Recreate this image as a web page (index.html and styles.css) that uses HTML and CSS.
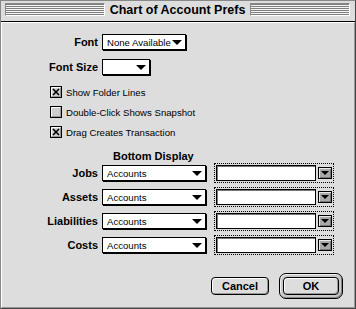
FILE: index.html
```html
<!DOCTYPE html>
<html lang="en">
<head>
  <meta charset="UTF-8" />
  <title>Chart of Account Prefs</title>
  <link rel="stylesheet" href="styles.css">
</head>
<body>

<div class="window">
  <div class="titlebar">
    <span class="stripes"></span>
    <span class="title">Chart of Account Prefs</span>
    <span class="stripes"></span>
  </div>

  <div class="content">
    <div class="row font-row">
      <span class="label">Font</span>
      <div class="popup popup-font"><span>None Available</span><i class="arrow"></i></div>
    </div>
    <div class="row size-row">
      <span class="label">Font Size</span>
      <div class="popup popup-size"><span></span><i class="arrow"></i></div>
    </div>

    <div class="checks">
      <div class="check">
        <svg width="12" height="12" viewBox="0 0 12 12"><rect x="0.5" y="0.5" width="11" height="11" fill="#cfcfcf" stroke="#000"/><path d="M1.5 10V1.5H10" stroke="#fff" fill="none"/><path d="M2 10.5H10.5V2" stroke="#999" fill="none"/><path d="M3 3L9 9M9 3L3 9" stroke="#000" stroke-width="1.6"/></svg>
        <span>Show Folder Lines</span>
      </div>
      <div class="check">
        <svg width="12" height="12" viewBox="0 0 12 12"><rect x="0.5" y="0.5" width="11" height="11" fill="#cfcfcf" stroke="#000"/><path d="M1.5 10V1.5H10" stroke="#fff" fill="none"/><path d="M2 10.5H10.5V2" stroke="#999" fill="none"/></svg>
        <span>Double-Click Shows Snapshot</span>
      </div>
      <div class="check">
        <svg width="12" height="12" viewBox="0 0 12 12"><rect x="0.5" y="0.5" width="11" height="11" fill="#cfcfcf" stroke="#000"/><path d="M1.5 10V1.5H10" stroke="#fff" fill="none"/><path d="M2 10.5H10.5V2" stroke="#999" fill="none"/><path d="M3 3L9 9M9 3L3 9" stroke="#000" stroke-width="1.6"/></svg>
        <span>Drag Creates Transaction</span>
      </div>
    </div>

    <div class="section-title">Bottom Display</div>

    <div class="display-rows">
      <div class="row display-row">
        <span class="label">Jobs</span>
        <div class="popup popup-wide"><span>Accounts</span><i class="arrow"></i></div>
        <div class="combo"><div class="field"></div><div class="combo-btn"><i class="mini-arrow"></i></div></div>
      </div>
      <div class="row display-row">
        <span class="label">Assets</span>
        <div class="popup popup-wide"><span>Accounts</span><i class="arrow"></i></div>
        <div class="combo"><div class="field"></div><div class="combo-btn"><i class="mini-arrow"></i></div></div>
      </div>
      <div class="row display-row">
        <span class="label">Liabilities</span>
        <div class="popup popup-wide"><span>Accounts</span><i class="arrow"></i></div>
        <div class="combo"><div class="field"></div><div class="combo-btn"><i class="mini-arrow"></i></div></div>
      </div>
      <div class="row display-row">
        <span class="label">Costs</span>
        <div class="popup popup-wide"><span>Accounts</span><i class="arrow"></i></div>
        <div class="combo"><div class="field"></div><div class="combo-btn"><i class="mini-arrow"></i></div></div>
      </div>
    </div>

    <div class="buttons">
      <button class="btn cancel-btn">Cancel</button>
      <div class="default-ring"><button class="btn ok-btn">OK</button></div>
    </div>
  </div>
</div>

</body>
</html>
```

FILE: styles.css
```css
:root {
  --platinum: #dddddd;
  --shade: #999999;
  --dark: #444444;
}

* {
  margin: 0;
  padding: 0;
  box-sizing: border-box;
}

body {
  background: var(--platinum);
  font-family: 'Liberation Sans', Arial, sans-serif;
  color: #000;
}

.window {
  width: 356px;
  height: 309px;
  display: flex;
  flex-direction: column;
  background: var(--platinum);
  border-top: 1px solid #888;
  border-left: 1px solid #888;
  border-right: 1px solid var(--dark);
  border-bottom: 1px solid var(--dark);
}

/* title bar */
.titlebar {
  height: 21px;
  display: flex;
  align-items: flex-start;
  padding: 2px 5px 0 4px;
  border-bottom: 1px solid #000;
}

.stripes {
  flex: 1;
  height: 13px;
  border: 1px solid;
  border-color: #888 #fff #fff #888;
  background: repeating-linear-gradient(to bottom, #808080 0 1px, #f4f4f4 1px 2px);
}

.title {
  font-weight: bold;
  font-size: 12.5px;
  line-height: 14px;
  padding: 0 5px;
  white-space: nowrap;
}

/* dialog body */
.content {
  flex: 1;
  display: flex;
  flex-direction: column;
  border-top: 1px solid #fff;
  border-left: 1px solid #fff;
  border-right: 1px solid var(--shade);
  border-bottom: 1px solid var(--shade);
}

.row {
  display: flex;
  align-items: center;
}

.label {
  width: 96px;
  margin-right: 4px;
  text-align: right;
  font-weight: bold;
  font-size: 11px;
  white-space: nowrap;
}

.font-row {
  height: 16px;
  margin-top: 11px;
}

.size-row {
  height: 16px;
  margin-top: 9px;
}

.popup {
  height: 16px;
  display: flex;
  align-items: center;
  justify-content: space-between;
  padding: 0 3px 0 4px;
  background: #fff;
  border: 1px solid #000;
  box-shadow: 1px 1px 0 #000;
  font-size: 9.6px;
  white-space: nowrap;
}

.popup-font {
  width: 84px;
}

.popup-size {
  width: 48px;
}

.popup-wide {
  width: 104px;
}

.arrow {
  width: 0;
  height: 0;
  border-left: 5px solid transparent;
  border-right: 5px solid transparent;
  border-top: 5px solid #000;
}

/* checkboxes */
.checks {
  margin-top: 7px;
  padding-left: 48px;
}

.check {
  height: 20px;
  display: flex;
  align-items: center;
  gap: 4px;
  font-size: 9.6px;
}

.check svg {
  display: block;
}

.section-title {
  margin-top: 7px;
  padding-left: 111px;
  line-height: 14px;
  font-weight: bold;
  font-size: 11px;
}

.display-rows {
  display: flex;
  flex-direction: column;
  gap: 4px;
}

.display-row {
  height: 20px;
}

.combo {
  width: 120px;
  height: 20px;
  margin-left: 8px;
  display: flex;
  align-items: center;
  padding: 0 1px;
  border: 1px dotted #000;
}

.field {
  width: 100px;
  height: 16px;
  background: #fff;
  border: 1px solid #000;
  box-shadow: inset 1px 1px 0 #777;
}

.combo-btn {
  width: 14px;
  height: 12px;
  margin-left: 2px;
  display: flex;
  align-items: center;
  justify-content: center;
  background: #a8a8a8;
  border: 1px solid #000;
  box-shadow: inset 1px 1px 0 #e8e8e8, inset -1px -1px 0 #777;
}

.mini-arrow {
  width: 0;
  height: 0;
  border-left: 4px solid transparent;
  border-right: 4px solid transparent;
  border-top: 4px solid #000;
}

/* buttons */
.buttons {
  margin-top: 18px;
  display: flex;
  justify-content: flex-end;
  align-items: center;
  gap: 10px;
  padding-right: 11px;
}

.btn {
  height: 18px;
  background: var(--platinum);
  border: 1px solid #000;
  border-radius: 4px;
  box-shadow: inset 1px 1px 0 #fff, inset -1px -1px 0 #999;
  font-family: 'Liberation Sans', Arial, sans-serif;
  font-weight: bold;
  font-size: 11px;
  color: #000;
}

.cancel-btn {
  width: 58px;
}

.default-ring {
  width: 64px;
  height: 26px;
  display: flex;
  align-items: center;
  justify-content: center;
  background: #c8c8c8;
  border: 1px solid #000;
  border-radius: 7px;
  box-shadow: inset 1px 1px 0 #f0f0f0, inset -1px -1px 0 #888;
}

.ok-btn {
  width: 56px;
}
```
